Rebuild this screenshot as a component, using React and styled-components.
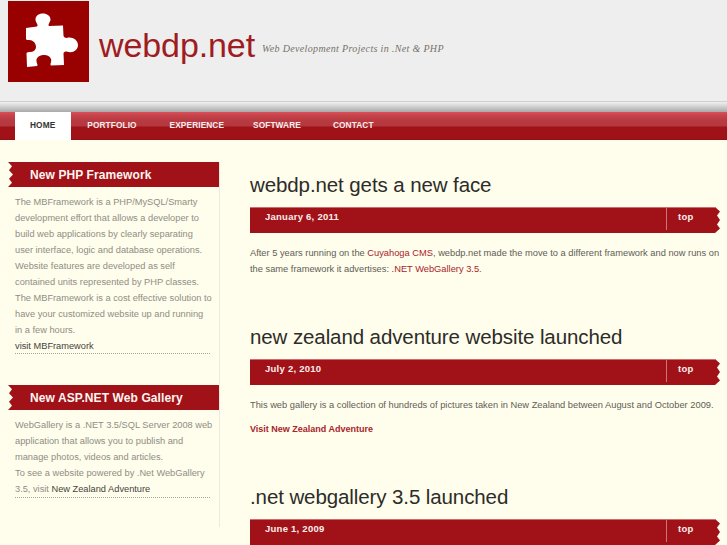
import React from 'react';
import styled, { createGlobalStyle } from 'styled-components';

const GlobalStyle = createGlobalStyle`
  html, body {
    margin: 0;
    padding: 0;
    height: 545px;
    overflow: hidden;
    background: #fffdeb;
    font-family: "Liberation Sans", Arial, sans-serif;
  }
`;

const RED = '#a01218';

const Header = styled.header`
  height: 101px;
  background: #eeeeee;
  padding: 1px 0 0 8px;
  box-sizing: border-box;
  display: flex;
  align-items: flex-start;
`;

const Logo = styled.svg`
  width: 81px;
  height: 81px;
  flex: none;
`;

const Brand = styled.div`
  margin: 19px 0 0 10px;
  font-size: 34px;
  line-height: 50px;
  color: #9f1c22;
  letter-spacing: -0.1px;
`;

const Tagline = styled.div`
  margin: 41px 0 0 7px;
  font-family: "Liberation Serif", serif;
  font-style: italic;
  font-size: 10px;
  line-height: 14px;
  letter-spacing: 0.34px;
  color: #77726a;
`;

const Strip = styled.div`
  height: 11px;
  border-top: 1px solid #cfcfcf;
  box-sizing: border-box;
  background: linear-gradient(#f0f0f0, #d8d8d8 35%, #a9a9a9);
`;

const Nav = styled.nav`
  height: 28px;
  display: flex;
  padding-left: 15px;
  border-bottom: 1px solid #8c1016;
  box-sizing: border-box;
  background: linear-gradient(#d9505a 0, #c8444c 3px, #b93a42 8px, #b5383f 14px, #a01218 15px, #a01218 100%);
`;

const NavItem = styled.a`
  height: 28px;
  box-sizing: border-box;
  padding: 8px ${(p) => p.$right}px 0 ${(p) => p.$left}px;
  font-size: 8.3px;
  line-height: 11px;
  font-weight: bold;
  letter-spacing: 0.1px;
  color: ${(p) => (p.$active ? '#333333' : '#fbeeee')};
  background: ${(p) => (p.$active ? '#ffffff' : 'transparent')};
`;

const Body = styled.div`
  display: flex;
  align-items: flex-start;
  padding: 22px 0 0 8px;
`;

const Sidebar = styled.aside`
  width: 212px;
  height: 365px;
  flex: none;
  border-right: 1px solid #eeebdc;
  box-sizing: border-box;
`;

const Ribbon = styled.h3`
  margin: 0;
  height: 25px;
  padding-left: 22px;
  background: ${RED};
  color: #fff5f2;
  font-size: 12px;
  line-height: 26px;
  font-weight: bold;
  letter-spacing: 0.1px;
  clip-path: polygon(0 0, 100% 0, 100% 100%, 0 100%, 4px 83%, 1px 67%, 5px 50%, 1px 33%, 4px 17%);
`;

const Blurb = styled.div`
  margin: 0 9px 31px 7px;
  padding: 7px 0 0;
  height: ${(p) => p.$height}px;
  box-sizing: border-box;
  border-bottom: 1px dotted #a8a598;
  font-size: 9.25px;
  line-height: 16px;
  white-space: nowrap;
  color: #8f8d86;
`;

const DarkLink = styled.a`
  color: #45433e;
`;

const Main = styled.main`
  margin: 10px 0 0 30px;
  width: 470px;
  flex: none;
`;

const Post = styled.article`
  height: ${(p) => p.$height}px;
`;

const PostTitle = styled.h2`
  margin: 0;
  font-size: 20.5px;
  line-height: 26px;
  font-weight: normal;
  color: #2c2c2a;
  letter-spacing: -0.1px;
  padding-bottom: 9px;
`;

const DateBand = styled.div`
  height: 26px;
  display: flex;
  background: ${RED};
  border-top: 1px solid #cf6a6e;
  box-sizing: border-box;
  color: #fbeeee;
  font-size: 9.5px;
  line-height: 18px;
  font-weight: bold;
  letter-spacing: 0.25px;
  clip-path: polygon(0 0, calc(100% - 5px) 0, 100% 17%, calc(100% - 3px) 33%, 100% 50%, calc(100% - 3px) 67%, 100% 83%, calc(100% - 5px) 100%, 0 100%);
`;

const DateText = styled.div`
  flex: 1;
  padding-left: 15px;
`;

const TopLink = styled.a`
  width: 54px;
  height: 22px;
  box-sizing: border-box;
  padding-left: 11px;
  border-left: 1px solid #c9777a;
`;

const Paragraph = styled.p`
  margin: ${(p) => p.$gap}px 0 0;
  font-size: 9.3px;
  line-height: 16px;
  white-space: nowrap;
  color: #605e58;
`;

const RedLink = styled.a`
  color: #a8242c;
  font-weight: ${(p) => (p.$bold ? 'bold' : 'normal')};
  font-size: ${(p) => (p.$bold ? '9px' : 'inherit')};
`;

const App = () => (
  <>
    <GlobalStyle />
    <Header>
      <Logo viewBox="0 0 81 81">
        <rect width="81" height="81" fill="#990000" />
        <path
          fill="#ffffff"
          d="M18 27 L29 25.5 C31 24 27 21 27.5 18 C28 14 31.5 12.5 35 12.5 C39 12.5 42.5 15 42.5 18.5 C42.5 21 39.5 23.5 41 25 L55 24.5 L55.5 35 C57 37.5 58.5 37 60.5 36.5 C65 36 70 39 70 44 C70 49 65 52 61 51 C59 50.5 57 50 55.5 52 L56 64 L43 64.5 C41.5 63 44 61 43 58 C42 55 38.5 53.5 35 54 C31 54.5 28 57 28.5 60 C28.5 62.5 30.5 64 29 65 L19 66 L18.5 52 C20 50.5 22 51.5 25 50.5 C28 49 28.5 46 27.5 43.5 C26.5 40 23 38.5 20 39 C19 39 18.5 39 18 38 Z"
        />
      </Logo>
      <Brand>webdp.net</Brand>
      <Tagline>Web Development Projects in .Net &amp; PHP</Tagline>
    </Header>
    <Strip />
    <Nav>
      <NavItem $active $left={15} $right={16}>HOME</NavItem>
      <NavItem $left={16} $right={16}>PORTFOLIO</NavItem>
      <NavItem $left={17} $right={16}>EXPERIENCE</NavItem>
      <NavItem $left={13} $right={16}>SOFTWARE</NavItem>
      <NavItem $left={16} $right={16}>CONTACT</NavItem>
    </Nav>
    <Body>
      <Sidebar>
        <Ribbon>New PHP Framework</Ribbon>
        <Blurb $height={167}>
          The MBFramework is a PHP/MySQL/Smarty<br />
          development effort that allows a developer to<br />
          build web applications by clearly separating<br />
          user interface, logic and database operations.<br />
          Website features are developed as self<br />
          contained units represented by PHP classes.<br />
          The MBFramework is a cost effective solution to<br />
          have your customized website up and running<br />
          in a few hours.<br />
          <DarkLink>visit MBFramework</DarkLink>
        </Blurb>
        <Ribbon>New ASP.NET Web Gallery</Ribbon>
        <Blurb $height={88}>
          WebGallery is a .NET 3.5/SQL Server 2008 web<br />
          application that allows you to publish and<br />
          manage photos, videos and articles.<br />
          To see a website powered by .Net WebGallery<br />
          3.5, visit <DarkLink>New Zealand Adventure</DarkLink>
        </Blurb>
      </Sidebar>
      <Main>
        <Post $height={152}>
          <PostTitle>webdp.net gets a new face</PostTitle>
          <DateBand>
            <DateText>January 6, 2011</DateText>
            <TopLink>top</TopLink>
          </DateBand>
          <Paragraph $gap={12}>
            After 5 years running on the <RedLink>Cuyahoga CMS</RedLink>, webdp.net made the move to a different framework and now runs on<br />
            the same framework it advertises: <RedLink>.NET WebGallery 3.5</RedLink>.
          </Paragraph>
        </Post>
        <Post $height={160}>
          <PostTitle>new zealand adventure website launched</PostTitle>
          <DateBand>
            <DateText>July 2, 2010</DateText>
            <TopLink>top</TopLink>
          </DateBand>
          <Paragraph $gap={12}>This web gallery is a collection of hundreds of pictures taken in New Zealand between August and October 2009.</Paragraph>
          <Paragraph $gap={8}>
            <RedLink $bold>Visit New Zealand Adventure</RedLink>
          </Paragraph>
        </Post>
        <Post $height={60}>
          <PostTitle>.net webgallery 3.5 launched</PostTitle>
          <DateBand>
            <DateText>June 1, 2009</DateText>
            <TopLink>top</TopLink>
          </DateBand>
        </Post>
      </Main>
    </Body>
  </>
);

export default App;
